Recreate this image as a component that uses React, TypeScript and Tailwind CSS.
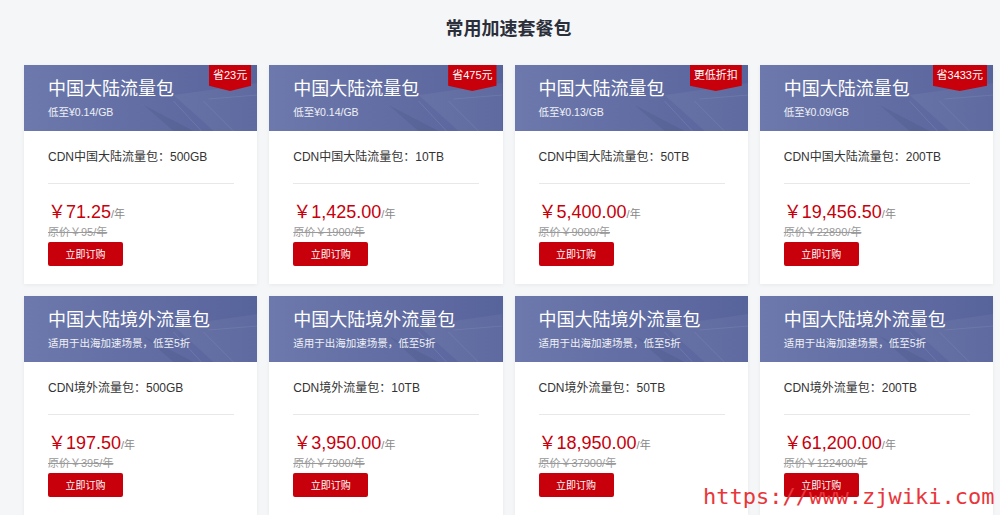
import React from 'react';

type Plan = {
  title: string;
  sub: string;
  badge?: string;
  spec: string;
  price: string;
  orig: string;
};

const plans: Plan[] = [
  { title: '中国大陆流量包', sub: '低至¥0.14/GB', badge: '省23元', spec: 'CDN中国大陆流量包：500GB', price: '71.25', orig: '原价￥95/年' },
  { title: '中国大陆流量包', sub: '低至¥0.14/GB', badge: '省475元', spec: 'CDN中国大陆流量包：10TB', price: '1,425.00', orig: '原价￥1900/年' },
  { title: '中国大陆流量包', sub: '低至¥0.13/GB', badge: '更低折扣', spec: 'CDN中国大陆流量包：50TB', price: '5,400.00', orig: '原价￥9000/年' },
  { title: '中国大陆流量包', sub: '低至¥0.09/GB', badge: '省3433元', spec: 'CDN中国大陆流量包：200TB', price: '19,456.50', orig: '原价￥22890/年' },
  { title: '中国大陆境外流量包', sub: '适用于出海加速场景，低至5折', spec: 'CDN境外流量包：500GB', price: '197.50', orig: '原价￥395/年' },
  { title: '中国大陆境外流量包', sub: '适用于出海加速场景，低至5折', spec: 'CDN境外流量包：10TB', price: '3,950.00', orig: '原价￥7900/年' },
  { title: '中国大陆境外流量包', sub: '适用于出海加速场景，低至5折', spec: 'CDN境外流量包：50TB', price: '18,950.00', orig: '原价￥37900/年' },
  { title: '中国大陆境外流量包', sub: '适用于出海加速场景，低至5折', spec: 'CDN境外流量包：200TB', price: '61,200.00', orig: '原价￥122400/年' },
];

const HeaderLines = () => (
  <svg className="absolute inset-0 w-full h-full pointer-events-none" viewBox="0 0 234 66" preserveAspectRatio="none">
    <polygon points="150,30 234,18 234,66 190,66" fill="rgba(255,255,255,0.05)" />
    <polygon points="120,40 170,66 150,66" fill="rgba(0,0,20,0.06)" />
    <line x1="150" y1="36" x2="178" y2="66" stroke="rgba(255,255,255,0.12)" strokeWidth="0.8" />
    <line x1="180" y1="36" x2="210" y2="66" stroke="rgba(255,255,255,0.10)" strokeWidth="0.8" />
    <line x1="185" y1="34" x2="234" y2="30" stroke="rgba(255,255,255,0.10)" strokeWidth="0.8" />
  </svg>
);

const PlanCard = ({ plan }: { plan: Plan }) => (
  <div className="bg-white shadow-[0_1px_4px_rgba(0,0,0,0.06)] h-[219px] flex flex-col">
    <div className="relative h-[66px] bg-gradient-to-r from-[#6d79ac] to-[#57639b] px-6 pt-[11px] overflow-hidden">
      <HeaderLines />
      <div className="relative text-white text-[18px] leading-[26px]">{plan.title}</div>
      <div className="relative text-white/90 text-[10.5px] leading-[16px] mt-[2px]">{plan.sub}</div>
      {plan.badge && (
        <div className="absolute top-0 right-[6px] bg-[#c7000b] text-white text-[11px] leading-[20px] h-[26px] px-[4px] [clip-path:polygon(0_0,100%_0,100%_80%,50%_100%,0_80%)]">
          {plan.badge}
        </div>
      )}
    </div>
    <div className="px-6 pt-4">
      <div className="text-[12px] leading-[20px] text-[#333]">{plan.spec}</div>
      <div className="h-px bg-[#e8e8e8] mt-4 w-[186px]" />
      <div className="mt-[17px] leading-[22px] text-[#c7000b]">
        <span className="text-[18px]">￥{plan.price}</span>
        <span className="text-[11px] text-[#888]">/年</span>
      </div>
      <div className="text-[11px] leading-[14px] text-[#999] line-through">{plan.orig}</div>
      <button className="mt-[3px] w-[75px] h-6 bg-[#c7000b] text-white text-[10px] rounded-[2px]">立即订购</button>
    </div>
  </div>
);

export default function App() {
  return (
    <div className="relative w-[1000px] h-[515px] overflow-hidden bg-[#f5f6f8] font-['Liberation_Sans','Noto_Sans_CJK_SC',sans-serif]">
      <h2 className="text-center text-[18px] font-bold text-[#2b2f3a] pt-[17px] leading-[24px] pl-[17px]">常用加速套餐包</h2>
      <div className="grid grid-cols-4 gap-3 pl-6 pr-[7px] mt-[24px]">
        {plans.map((p, i) => (
          <PlanCard key={i} plan={p} />
        ))}
      </div>
      <div className="absolute left-[703px] top-[482px] text-[22px] leading-[30px] text-[#e8363b] font-['DejaVu_Sans_Mono',monospace]">
        https://www.zjwiki.com
      </div>
    </div>
  );
}
